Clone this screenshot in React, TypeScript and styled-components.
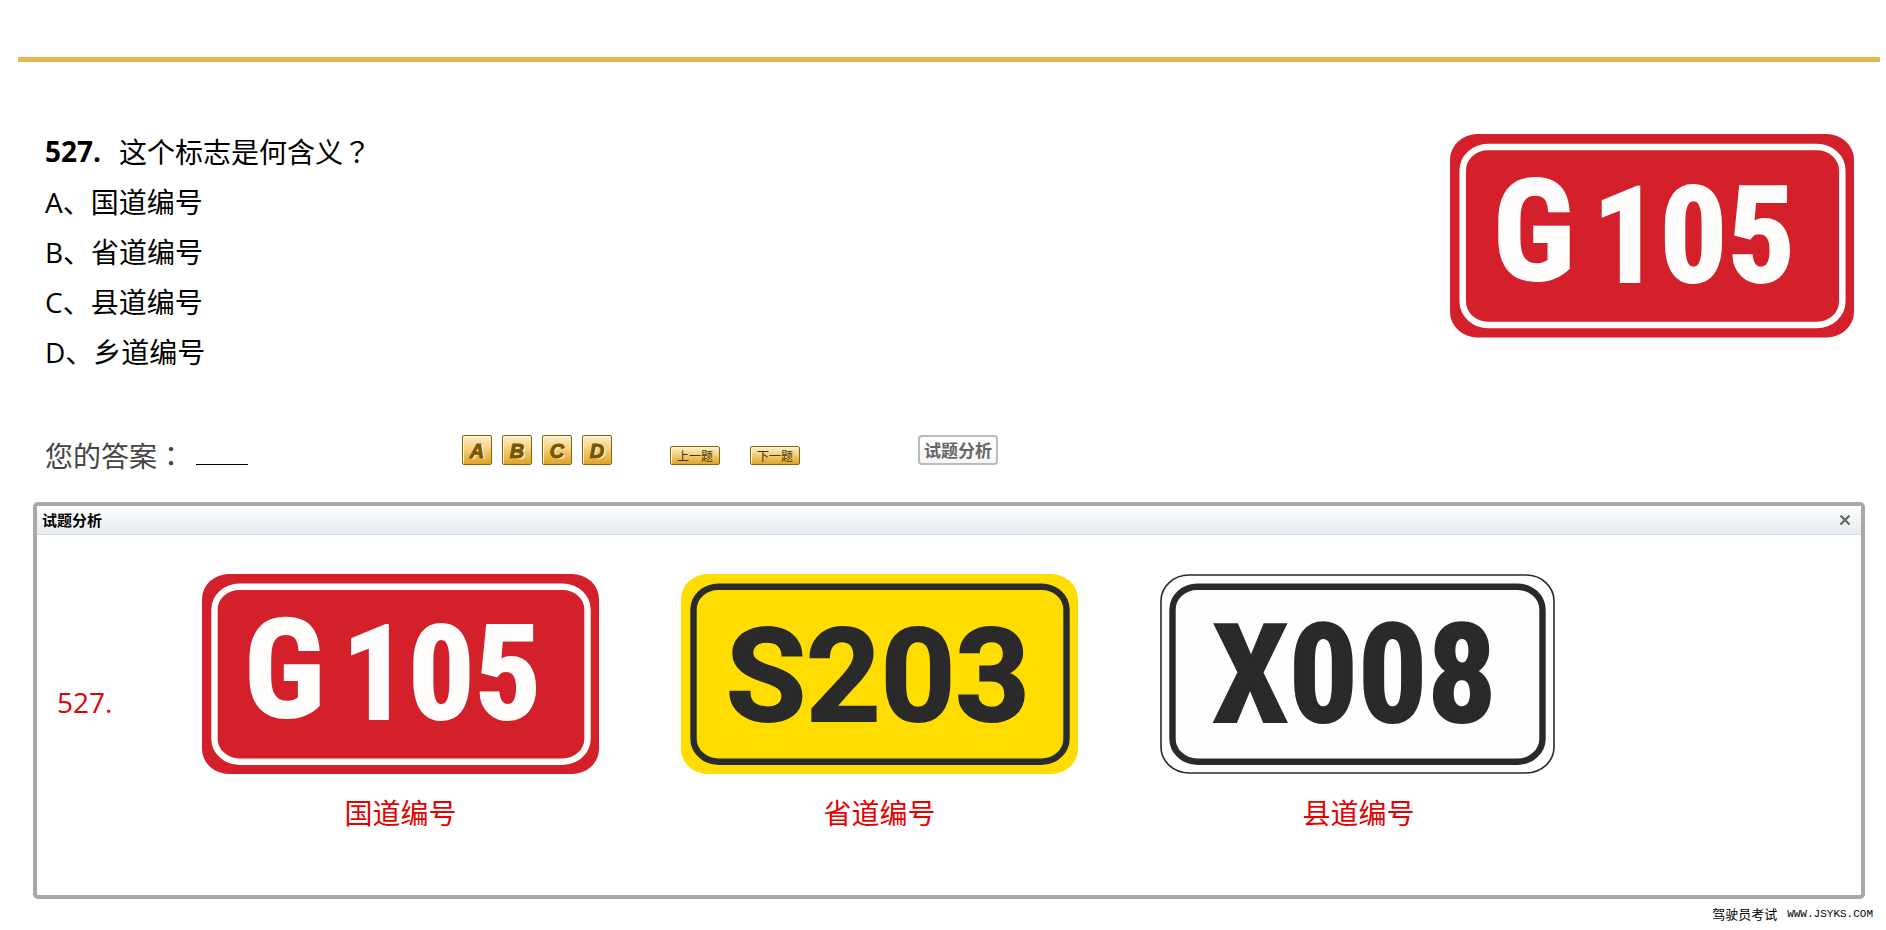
import React, { useState } from "react";
import styled, { createGlobalStyle } from "styled-components";

const GlobalStyle = createGlobalStyle`
  *, *::before, *::after { box-sizing: border-box; }
  body {
    margin: 0;
    background: #fff;
    color: #000;
    font-family: "Open Sans", "Noto Sans CJK SC", sans-serif;
    font-size: 28px;
  }
`;

const Page = styled.main`
  padding-top: 57px;
`;

const Rule = styled.hr`
  height: 5px;
  margin: 0 6px 0 18px;
  border: 0;
  background: #e9b74f;
`;

const Question = styled.section`
  display: flex;
  justify-content: space-between;
  align-items: flex-start;
  padding: 64px 32px 0 45px;
`;

const QuestionSign = styled.div`
  flex: none;
  width: 404px;
  margin-top: 8px;
`;

const Title = styled.h1`
  display: flex;
  gap: 18px;
  margin: 0;
  font-size: 28px;
  font-weight: 400;
  line-height: 50px;
`;

/* Full-width punctuation centred in its cell */
const Mark = styled.span`
  font-family: "Noto Sans CJK TC", sans-serif;
`;

const Options = styled.ol`
  margin: 0;
  padding: 0;
  list-style: none;
  line-height: 50px;
`;

const AnswerBar = styled.form`
  display: flex;
  align-items: flex-end;
  height: 30px;
  margin: 58px 21px 0 45px;
`;

const AnswerLabel = styled.label`
  width: 151px;
  line-height: 36px;
  color: #444;
  white-space: nowrap;
  align-self: center;
  margin-top: 10px;
`;

const AnswerInput = styled.input`
  width: 52px;
  height: 28px;
  margin-right: 214px;
  padding: 0;
  border: 0;
  border-bottom: 1px solid #000;
  background: transparent;
  font: inherit;
  font-size: 20px;
  text-align: center;
  outline: 0;
`;

const ButtonGroup = styled.div<{ $gap: number; $after: number }>`
  display: flex;
  align-items: flex-end;
  gap: ${(p) => p.$gap}px;
  margin-right: ${(p) => p.$after}px;
`;

const GoldButton = styled.button`
  padding: 0;
  border: 1px solid #8a6410;
  border-radius: 2px;
  background: linear-gradient(#fdf0cc, #f2cd74 50%, #dfa32a);
  box-shadow: inset 1px 1px #fff3cf;
  cursor: pointer;
`;

const ChoiceButton = styled(GoldButton)`
  width: 30px;
  height: 30px;
  color: #7a5600;
  font: italic 900 20px/30px "Liberation Sans", sans-serif;
  text-shadow: 2px 1px #fff3cf;
  -webkit-text-stroke: 1px #7a5600;
`;

const StepButton = styled(GoldButton)`
  width: 50px;
  height: 19px;
  color: #4a3400;
  font: 12px/17px "Noto Sans CJK SC", sans-serif;
  white-space: nowrap;
`;

const AnalysisButton = styled.button`
  width: 80px;
  height: 30px;
  padding: 0;
  border: 2px solid #bbb;
  border-radius: 4px;
  background: linear-gradient(#fff, #f6f5f8);
  color: #666;
  font: bold 17px/26px "Noto Sans CJK SC", sans-serif;
  cursor: pointer;
`;

const Panel = styled.section`
  margin: 37px 21px 0 33px;
  border: 4px solid #a8a8a8;
  border-radius: 5px;
`;

const PanelHeader = styled.header`
  display: flex;
  justify-content: space-between;
  align-items: center;
  height: 29px;
  padding: 0 10px 0 5px;
  border-bottom: 1px solid #d3dce1;
  background: linear-gradient(#fff, #e6ebef);
`;

const PanelTitle = styled.h2`
  margin: 0;
  font: bold 15px/28px "Noto Sans CJK SC", sans-serif;
`;

const CloseButton = styled.button`
  display: flex;
  padding: 0;
  border: 0;
  background: none;
  cursor: pointer;
`;

const PanelBody = styled.div`
  display: flex;
  align-items: center;
  padding: 39px 20px 62px;
  color: #e60000;
`;

const PanelNumber = styled.span`
  flex: none;
  width: 145px;
  padding-bottom: 4px;
`;

const SignList = styled.div`
  display: flex;
  gap: 82px;
`;

const SignCard = styled.figure`
  width: 397px;
  margin: 0;
`;

const Caption = styled.figcaption`
  padding-top: 19px;
  line-height: 40px;
  text-align: center;
`;

const Footer = styled.footer`
  display: flex;
  justify-content: flex-end;
  align-items: center;
  gap: 10px;
  margin-right: 13px;
  padding-top: 5px;
  font-size: 13px;
  line-height: 20px;
`;

const Site = styled.span`
  font-family: "Liberation Mono", monospace;
  font-size: 11px;
`;

const SignSvg = styled.svg`
  display: block;
  width: 100%;
  height: auto;
`;

const WIDE = "Roboto, sans-serif";
const NARROW = '"Roboto Condensed", Roboto, sans-serif';

interface Lettering {
  text: string;
  x: number;
  y: number;
  size: number;
  font: string;
}

interface SignStyle {
  label: string;
  face: string;
  line: string;
  edge?: string;
  lettering: Lettering[];
}

const SIGNS: Record<string, SignStyle> = {
  national: {
    label: "G105",
    face: "#d4202a",
    line: "#fffefc",
    lettering: [
      { text: "G", x: 42, y: 143, size: 138, font: NARROW },
      { text: "105", x: 140, y: 145, size: 131, font: NARROW },
    ],
  },
  provincial: {
    label: "S203",
    face: "#ffdd00",
    line: "#2a2a2a",
    lettering: [{ text: "S203", x: 45, y: 147, size: 130, font: WIDE }],
  },
  county: {
    label: "X008",
    face: "#fefefe",
    line: "#2a2a2a",
    edge: "#2a2a2a",
    lettering: [{ text: "X008", x: 52, y: 148, size: 137, font: NARROW }],
  },
};

function RoadSign({ kind }: { kind: string }) {
  const s = SIGNS[kind];
  return (
    <SignSvg viewBox="0 0 397 200" role="img" aria-label={s.label}>
      {s.edge ? (
        <rect x="1" y="1" width="393" height="198" rx="28" ry="26" fill={s.face} stroke={s.edge} strokeWidth="1.6" />
      ) : (
        <rect width="397" height="200" rx="27" ry="25" fill={s.face} />
      )}
      <rect
        x="12.5"
        y="12.7"
        width={s.edge ? 370 : 373}
        height="175"
        rx="25"
        ry="23"
        fill="none"
        stroke={s.line}
        strokeWidth="6.4"
      />
      <g fill={s.line} stroke={s.line} strokeWidth="2" fontWeight="700">
        {s.lettering.map((l) => (
          <text key={l.text} x={l.x} y={l.y} fontSize={l.size} fontFamily={l.font}>
            {l.text}
          </text>
        ))}
      </g>
    </SignSvg>
  );
}

const OPTIONS = ["A、国道编号", "B、省道编号", "C、县道编号", "D、乡道编号"];
const CARDS = [
  ["national", "国道编号"],
  ["provincial", "省道编号"],
  ["county", "县道编号"],
];

export default function App() {
  const [answer, setAnswer] = useState("");
  const [open, setOpen] = useState(true);
  return (
    <>
      <GlobalStyle />
      <Page lang="zh-CN">
        <Rule />
        <Question>
          <div>
            <Title>
              <b>527.</b>
              <span>这个标志是何含义<Mark lang="zh-TW">？</Mark></span>
            </Title>
            <Options>
              {OPTIONS.map((o) => <li key={o}>{o}</li>)}
            </Options>
          </div>
          <QuestionSign><RoadSign kind="national" /></QuestionSign>
        </Question>

        <AnswerBar onSubmit={(e) => e.preventDefault()}>
          <AnswerLabel htmlFor="answer">您的答案<Mark lang="zh-TW">：</Mark></AnswerLabel>
          <AnswerInput id="answer" value={answer} onChange={(e) => setAnswer(e.target.value)} />
          <ButtonGroup $gap={10} $after={58}>
            {["A", "B", "C", "D"].map((c) => (
              <ChoiceButton key={c} type="button" onClick={() => setAnswer(c)}>{c}</ChoiceButton>
            ))}
          </ButtonGroup>
          <ButtonGroup $gap={30} $after={118}>
            <StepButton type="button">上一题</StepButton>
            <StepButton type="button">下一题</StepButton>
          </ButtonGroup>
          <AnalysisButton type="button" onClick={() => setOpen(true)}>试题分析</AnalysisButton>
        </AnswerBar>

        {open && (
          <Panel>
            <PanelHeader>
              <PanelTitle>试题分析</PanelTitle>
              <CloseButton type="button" aria-label="关闭" onClick={() => setOpen(false)}>
                <svg width="12" height="12" viewBox="0 0 12 12">
                  <path d="M1.5 1.5L10.5 10.5M10.5 1.5L1.5 10.5" stroke="#6a6a6a" strokeWidth="2.4" />
                </svg>
              </CloseButton>
            </PanelHeader>
            <PanelBody>
              <PanelNumber>527.</PanelNumber>
              <SignList>
                {CARDS.map(([kind, name]) => (
                  <SignCard key={kind}>
                    <RoadSign kind={kind} />
                    <Caption>{name}</Caption>
                  </SignCard>
                ))}
              </SignList>
            </PanelBody>
          </Panel>
        )}

        <Footer>
          <span>驾驶员考试</span>
          <Site>WWW.JSYKS.COM</Site>
        </Footer>
      </Page>
    </>
  );
}
